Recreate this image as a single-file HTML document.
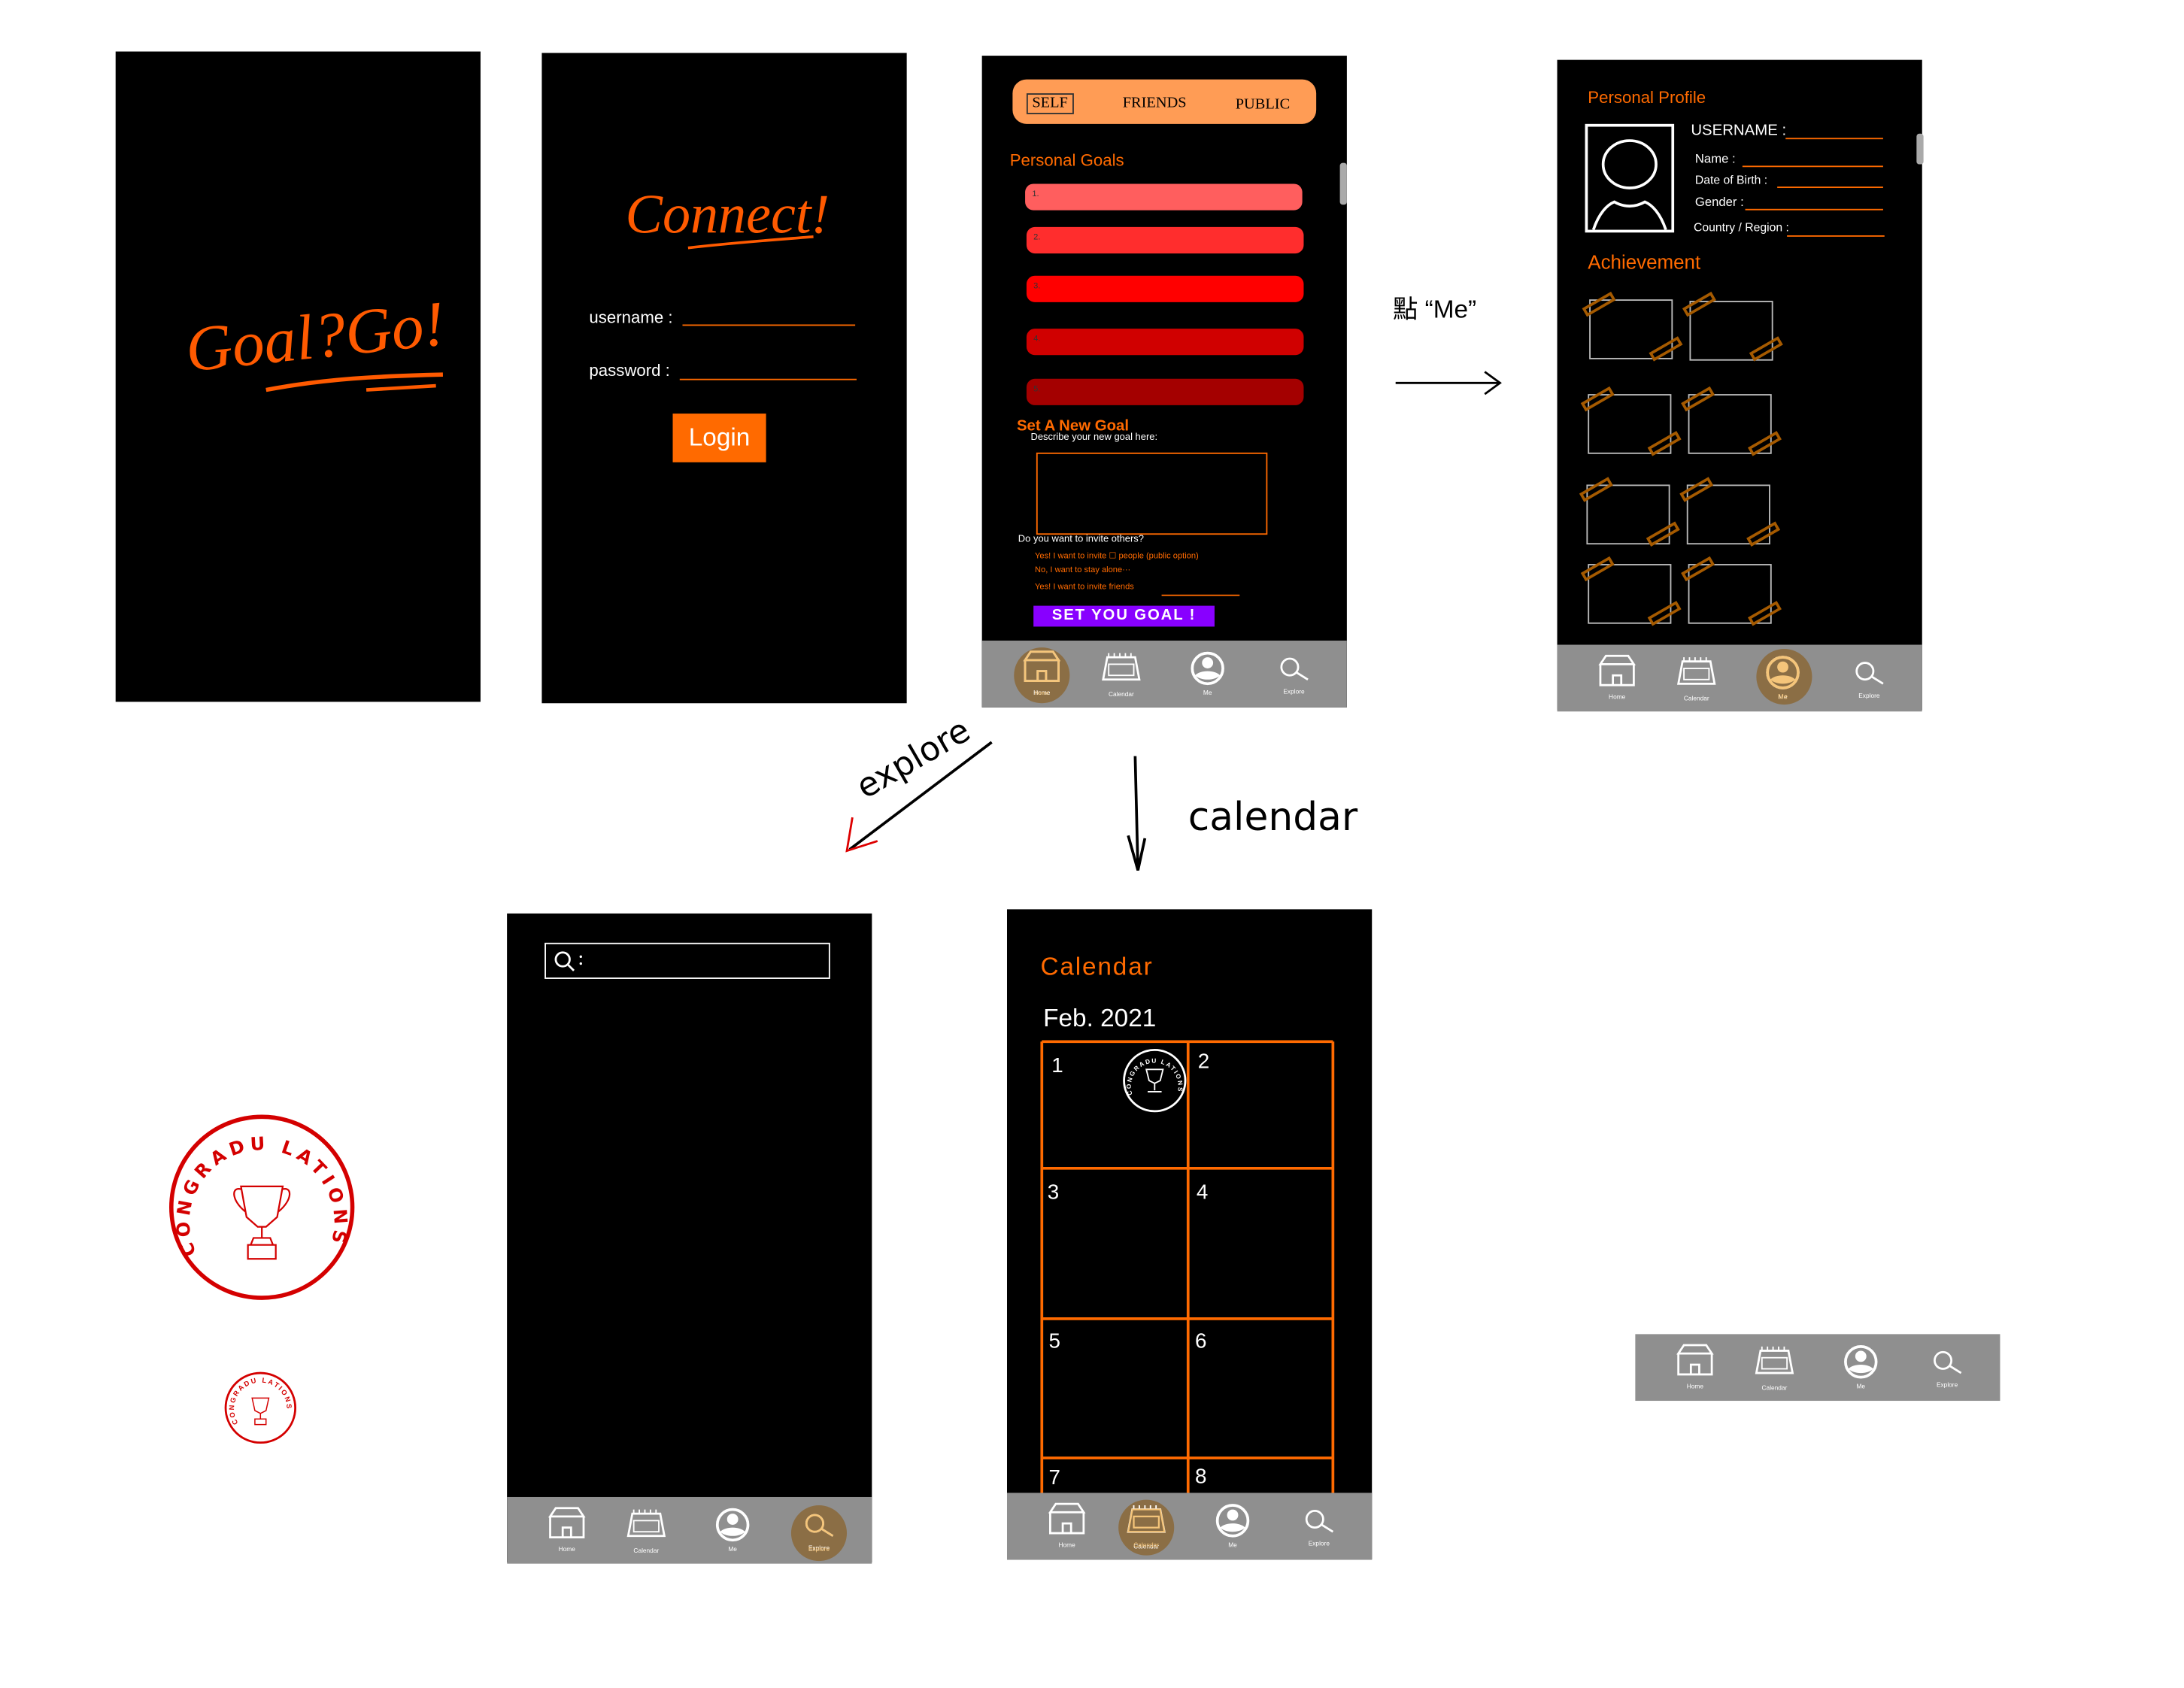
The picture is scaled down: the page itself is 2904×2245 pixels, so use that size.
<!DOCTYPE html>
<html><head><meta charset="utf-8"><style>
html,body{margin:0;padding:0;background:#fff;width:2904px;height:2244px;overflow:hidden}
#w{position:absolute;left:0;top:0;width:1568px;height:1212px;transform:scale(1.852);transform-origin:0 0;font-family:"Liberation Sans","Noto Sans CJK TC",sans-serif}
.a{position:absolute}
.ph{position:absolute;background:#000}
.t{position:absolute;white-space:nowrap}
.or{color:#ff6a00}
.hand{font-family:"DejaVu Sans","Liberation Sans",sans-serif}
.bar{position:absolute;height:19px;border-radius:6px;left:31px;width:199px}
.bar span{position:absolute;left:5px;top:5px;font-size:6px;color:#333}
.ln{position:absolute;border-bottom:1px solid #ff6a00;height:0}
.fr{position:absolute;width:60px;height:43px;border:1.5px solid #bbb;box-sizing:border-box}
.tape{position:absolute;width:24px;height:7px;border:2px solid #a55a00;transform:rotate(-30deg);box-sizing:border-box}
</style></head><body><div id="w">

<!-- phone 1 -->
<div class="ph" style="left:83px;top:37px;width:262px;height:467px">
<div class="t" style="left:50px;top:178px;font-size:46px;font-style:italic;font-family:'Liberation Serif',serif;color:#ff5a00;transform:rotate(-6deg)">Goal?Go!</div>
<svg class="a" style="left:100px;top:225px" width="140" height="25"><path d="M8 18 C50 10 90 8 135 7" stroke="#ff5a00" stroke-width="3" fill="none"/><path d="M80 18 L130 15" stroke="#ff5a00" stroke-width="2.5"/></svg>
</div>

<!-- phone 2 -->
<div class="ph" style="left:389px;top:38px;width:262px;height:467px">
<div class="t" style="left:60px;top:92px;font-size:40px;font-style:italic;font-family:'Liberation Serif',serif;color:#ff5a00">Connect!</div>
<svg class="a" style="left:100px;top:128px" width="100" height="20"><path d="M5 12 C40 8 70 6 95 4" stroke="#ff5a00" stroke-width="2" fill="none"/></svg>
<div class="t" style="left:34px;top:183px;font-size:12px;color:#fff">username :</div>
<div class="ln" style="left:101px;top:195px;width:124px"></div>
<div class="t" style="left:34px;top:221px;font-size:12px;color:#fff">password :</div>
<div class="ln" style="left:99px;top:234px;width:127px"></div>
<div class="a" style="left:94px;top:259px;width:67px;height:35px;background:#ff6a00;color:#fff;font-size:18px;text-align:center;line-height:35px">Login</div>
</div>

<!-- phone 3 -->
<div class="ph" style="left:705px;top:40px;width:262px;height:468px">
<div class="a" style="left:22px;top:17px;width:218px;height:32px;background:#ff9c55;border-radius:10px"></div>
<div class="t" style="left:32px;top:27px;font-size:11px;font-family:'Liberation Serif',serif;border:1px solid #333;padding:0 3px;line-height:13px">SELF</div>
<div class="t" style="left:101px;top:28px;font-size:11px;font-family:'Liberation Serif',serif">FRIENDS</div>
<div class="t" style="left:182px;top:29px;font-size:11px;font-family:'Liberation Serif',serif">PUBLIC</div>
<div class="t or" style="left:20px;top:68px;font-size:12px">Personal Goals</div>
<div class="bar" style="top:92px;background:#ff5e5e"><span>1.</span></div>
<div class="bar" style="top:123px;background:#ff2d2d;left:32px"><span>2.</span></div>
<div class="bar" style="top:158px;background:#ff0000;left:32px"><span>3.</span></div>
<div class="bar" style="top:196px;background:#d00000;left:32px"><span>4.</span></div>
<div class="bar" style="top:232px;background:#a40000;left:32px"><span>5.</span></div>
<div class="a" style="left:257px;top:77px;width:5px;height:30px;background:#aaa;border-radius:2px"></div>
<div class="t or" style="left:25px;top:260px;font-size:11px;font-weight:bold">Set A New Goal</div>
<div class="t" style="left:35px;top:271px;font-size:7px;color:#fff">Describe your new goal here:</div>
<div class="a" style="left:39px;top:285px;width:166px;height:59px;border:1px solid #ff6a00;box-sizing:border-box"></div>
<div class="t" style="left:26px;top:344px;font-size:7px;color:#fff">Do you want to invite others?</div>
<div class="t or" style="left:38px;top:356px;font-size:6px">Yes! I want to invite ☐ people (public option)</div>
<div class="t or" style="left:38px;top:367px;font-size:6px">No, I want to stay alone···</div>
<div class="t or" style="left:38px;top:379px;font-size:6px">Yes! I want to invite friends</div>
<div class="ln" style="left:129px;top:387px;width:56px"></div>
<div class="a" style="left:37px;top:395px;width:130px;height:15px;background:#8800ff;color:#fff;font-size:11px;font-weight:bold;line-height:15px;text-align:center;letter-spacing:1px">SET YOU GOAL !</div>
</div>

<!-- phone 4 -->
<div class="ph" style="left:1118px;top:43px;width:262px;height:467px">
<div class="t or" style="left:22px;top:20px;font-size:12px">Personal Profile</div>
<div class="a" style="left:20px;top:46px;width:64px;height:78px;border:2px solid #fff;box-sizing:border-box;overflow:hidden">
<svg width="60" height="74"><ellipse cx="30" cy="27" rx="19" ry="17" stroke="#fff" stroke-width="2" fill="none"/><path d="M4 74 C8 62 14 56 19 54 C26 58 34 58 41 54 C46 56 52 62 56 74" stroke="#fff" stroke-width="2" fill="none"/></svg></div>
<div class="t" style="left:96px;top:45px;font-size:11px;color:#fff">USERNAME :</div>
<div class="ln" style="left:164px;top:56px;width:70px"></div>
<div class="t" style="left:99px;top:66px;font-size:9px;color:#fff">Name :</div>
<div class="ln" style="left:133px;top:76px;width:101px"></div>
<div class="t" style="left:99px;top:81px;font-size:8.5px;color:#fff">Date of Birth :</div>
<div class="ln" style="left:158px;top:91px;width:76px"></div>
<div class="t" style="left:99px;top:97px;font-size:9px;color:#fff">Gender :</div>
<div class="ln" style="left:135px;top:107px;width:99px"></div>
<div class="t" style="left:98px;top:115px;font-size:8.5px;color:#fff">Country / Region :</div>
<div class="ln" style="left:165px;top:126px;width:70px"></div>
<div class="t or" style="left:22px;top:137px;font-size:14px">Achievement</div>
<div class="fr" style="left:23px;top:172px"></div><div class="fr" style="left:95px;top:173px"></div>
<div class="fr" style="left:22px;top:240px"></div><div class="fr" style="left:94px;top:240px"></div>
<div class="fr" style="left:21px;top:305px"></div><div class="fr" style="left:93px;top:305px"></div>
<div class="fr" style="left:22px;top:362px"></div><div class="fr" style="left:94px;top:362px"></div>
<div class="tape" style="left:18px;top:172px"></div><div class="tape" style="left:66px;top:204px"></div>
<div class="tape" style="left:90px;top:172px"></div><div class="tape" style="left:138px;top:204px"></div>
<div class="tape" style="left:17px;top:240px"></div><div class="tape" style="left:65px;top:272px"></div>
<div class="tape" style="left:89px;top:240px"></div><div class="tape" style="left:137px;top:272px"></div>
<div class="tape" style="left:16px;top:305px"></div><div class="tape" style="left:64px;top:337px"></div>
<div class="tape" style="left:88px;top:305px"></div><div class="tape" style="left:136px;top:337px"></div>
<div class="tape" style="left:17px;top:362px"></div><div class="tape" style="left:65px;top:394px"></div>
<div class="tape" style="left:89px;top:362px"></div><div class="tape" style="left:137px;top:394px"></div>
<div class="a" style="left:258px;top:53px;width:5px;height:22px;background:#aaa;border-radius:2px"></div>
</div>

<!-- annotation Me -->
<div class="t" style="left:1000px;top:208px;font-size:18px;color:#000">點 “Me”</div>
<svg class="a" style="left:1000px;top:262px" width="82" height="26"><path d="M2 13 L76 13 M66 5 L77 13 L66 21" stroke="#000" stroke-width="1.5" fill="none"/></svg>

<!-- explore annotation -->
<div class="t hand" style="left:610px;top:555px;font-size:24px;color:#000;transform:rotate(-30deg);transform-origin:0 0">explore</div>
<svg class="a" style="left:600px;top:525px" width="120" height="95"><path d="M112 8 L10 85" stroke="#000" stroke-width="2"/><path d="M12 62 L8 86 L30 79" stroke="#d00" stroke-width="1.5" fill="none"/></svg>

<!-- calendar annotation -->
<svg class="a" style="left:805px;top:540px" width="25" height="95"><path d="M10 3 L12 85 M5 60 L12 85 L17 62" stroke="#000" stroke-width="2" fill="none"/></svg>
<div class="t hand" style="left:853px;top:570px;font-size:28px;color:#000">calendar</div>

<!-- phone 5 explore -->
<div class="ph" style="left:364px;top:656px;width:262px;height:466px">
<div class="a" style="left:27px;top:21px;width:205px;height:26px;border:1.5px solid #fff;box-sizing:border-box"></div>
<svg class="a" style="left:32px;top:25px" width="25" height="20"><circle cx="8" cy="8" r="5" stroke="#fff" stroke-width="1.5" fill="none"/><path d="M12 12 L16 16" stroke="#fff" stroke-width="1.5"/><circle cx="21" cy="6" r=".9" fill="#fff"/><circle cx="21" cy="11" r=".9" fill="#fff"/></svg>
</div>

<!-- phone 6 calendar -->
<div class="ph" style="left:723px;top:653px;width:262px;height:467px">
<div class="t or" style="left:24px;top:31px;font-size:18px;letter-spacing:1px">Calendar</div>
<div class="t" style="left:26px;top:68px;font-size:18px;color:#fff">Feb. 2021</div>
<svg class="a" style="left:0;top:0" width="262" height="420">
<g stroke="#ff6a00" stroke-width="2" fill="none">
<path d="M25 95 L25 420 M130 95 L130 420 M234 95 L234 420 M25 95 L234 95 M25 186 L234 186 M25 294 L234 294 M25 394 L234 394"/>
</g>
<g fill="#fff" font-size="15" font-family="Liberation Sans,sans-serif">
<text x="32" y="117">1</text><text x="137" y="114">2</text><text x="29" y="208">3</text><text x="136" y="208">4</text>
<text x="30" y="315">5</text><text x="135" y="315">6</text><text x="30" y="413">7</text><text x="135" y="412">8</text></g>
<circle cx="106" cy="123" r="22" stroke="#fff" stroke-width="1.5" fill="none"/>
<path id="sa" d="M90 133 A17 17 0 1 1 122 133" fill="none"/>
<text font-size="4.5" fill="#fff" font-weight="bold"><textPath href="#sa" textLength="62" lengthAdjust="spacing">CONGRADU LATIONS</textPath></text>
<path d="M100 115 L112 115 L110 123 L106 125 L102 123 Z M106 125 L106 130 M101 131 L111 131" stroke="#fff" stroke-width="1" fill="none"/>
</svg>
</div>

<!-- big stamp -->
<svg class="a" style="left:111px;top:790px" width="160" height="160">
<circle cx="77" cy="77" r="65" stroke="#d40000" stroke-width="3" fill="none"/>
<path id="sb" d="M30 110 A52 52 0 1 1 124 110" fill="none"/>
<text font-size="13" fill="#d40000" font-weight="bold" font-family="DejaVu Sans,sans-serif"><textPath href="#sb" textLength="200" lengthAdjust="spacing">CONGRADU LATIONS</textPath></text>
<g stroke="#d40000" stroke-width="1.2" fill="none">
<path d="M62 62 L92 62 L88 84 L80 91 L74 91 L66 84 Z"/>
<path d="M62 64 C55 62 55 72 65 80 M92 64 C99 62 99 72 89 80"/>
<path d="M77 91 L77 99 M71 99 L83 99 L85 104 L69 104 Z M67 104 L87 104 L87 114 L67 114 Z"/>
</g></svg>

<!-- small stamp -->
<svg class="a" style="left:158px;top:982px" width="60" height="60">
<circle cx="29" cy="29" r="25" stroke="#d40000" stroke-width="1.5" fill="none"/>
<path id="sc" d="M13 40 A19 19 0 1 1 45 40" fill="none"/>
<text font-size="5" fill="#d40000" font-weight="bold"><textPath href="#sc" textLength="70" lengthAdjust="spacing">CONGRADU LATIONS</textPath></text>
<path d="M23 22 L35 22 L33 31 L29 33 L25 31 Z M29 33 L29 37 M25 37 L33 37 L33 41 L25 41 Z" stroke="#d40000" stroke-width=".8" fill="none"/>
</svg>

<!-- nav bars -->
<svg class="a" style="left:705px;top:460px" width="262" height="48"><use href="#nav"/><circle cx="43" cy="25" r="20" fill="#8b6e45"/><use href="#icons"/><g stroke="#f5c57a" stroke-width="1.5" fill="none"><path d="M31 14 L35 8 L51 8 L55 14 Z M31 14 L31 29 L55 29 L55 14 M40 29 L40 22 L46 22 L46 29"/></g><text x="43" y="39" font-size="4" fill="#f5c57a" text-anchor="middle">Home</text></svg>
<svg class="a" style="left:1118px;top:463px" width="262" height="48"><use href="#nav"/><circle cx="163" cy="23" r="20" fill="#8b6e45"/><use href="#icons"/><circle cx="162" cy="20" r="11" stroke="#f5c57a" stroke-width="2" fill="#8b6e45"/><circle cx="162" cy="16" r="4" fill="#f5c57a"/><path d="M153 25 C157 21 167 21 171 25 C167 29 157 29 153 25Z" fill="#f5c57a"/><text x="162" y="39" font-size="5" fill="#f5c57a" text-anchor="middle">Me</text></svg>
<svg class="a" style="left:364px;top:1075px" width="262" height="48"><use href="#nav"/><circle cx="224" cy="26" r="20" fill="#8b6e45"/><use href="#icons"/><text x="224" y="39" font-size="4.5" fill="#f5c57a" text-anchor="middle">Explore</text><circle cx="221" cy="19" r="6" stroke="#f5c57a" stroke-width="1.5" fill="#8b6e45"/><path d="M226 23 L234 28" stroke="#f5c57a" stroke-width="1.5"/></svg>
<svg class="a" style="left:723px;top:1072px" width="262" height="48"><use href="#nav"/><circle cx="100" cy="25" r="20" fill="#8b6e45"/><use href="#icons"/><g stroke="#f5c57a" stroke-width="1.2" fill="#8b6e45"><path d="M87 28 L90 12 L110 12 L113 28 Z"/><rect x="91" y="17" width="18" height="8"/></g><text x="100" y="39" font-size="4.5" fill="#f5c57a" text-anchor="middle">Calendar</text></svg>
<svg class="a" style="left:1174px;top:958px" width="262" height="48"><use href="#nav"/><use href="#icons"/></svg>

<svg width="0" height="0" style="position:absolute"><defs>
<rect id="nav" width="262" height="48" fill="#8f8f8f"/>
<g id="icons">
<g stroke="#fff" stroke-width="1.5" fill="none">
<path d="M31 14 L35 8 L51 8 L55 14 Z M31 14 L31 29 L55 29 L55 14 M40 29 L40 22 L46 22 L46 29"/>
<path d="M87 28 L90 12 L110 12 L113 28 Z"/><rect x="91" y="17" width="18" height="8" stroke-width="1"/>
<path d="M91 9 L91 12 M95 9 L95 12 M99 9 L99 12 M103 9 L103 12 M107 9 L107 12" stroke-width="1"/>
<circle cx="162" cy="20" r="11" stroke-width="2"/>
<circle cx="221" cy="19" r="6"/><path d="M226 23 L234 28"/>
</g>
<circle cx="162" cy="16" r="4" fill="#fff"/><path d="M153 25 C157 21 167 21 171 25 C167 29 157 29 153 25Z" fill="#fff"/>
<g font-size="4.5" fill="#fff" text-anchor="middle" font-family="Liberation Sans,sans-serif">
<text x="43" y="39">Home</text><text x="100" y="40">Calendar</text><text x="162" y="39">Me</text><text x="224" y="38">Explore</text></g>
</g></defs></svg>

</div></body></html>
